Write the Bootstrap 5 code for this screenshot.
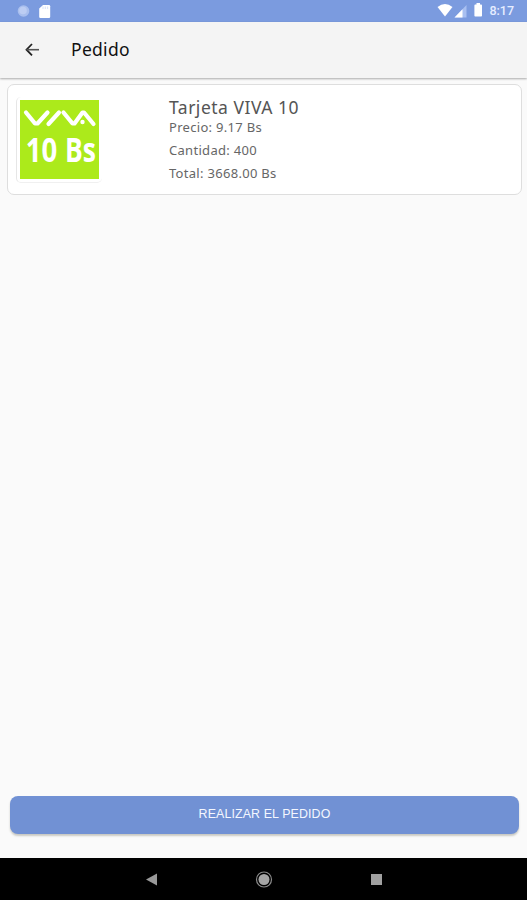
<!DOCTYPE html>
<html lang="es">
<head>
<meta charset="utf-8">
<meta name="viewport" content="width=device-width, initial-scale=1">
<title>Pedido</title>
<link href="https://cdn.jsdelivr.net/npm/bootstrap@5.3.0/dist/css/bootstrap.min.css" rel="stylesheet">
<style>
body{background:#fafafa;font-family:"Noto Sans","Open Sans",sans-serif;height:900px;overflow:hidden}
.status-bar{height:22px;background:#7b9bdf;padding:0 13px 0 17px}
.clock{font:500 12.5px/22px Roboto,sans-serif;color:#e6edff;margin-left:6px}
.app-bar{height:56px;background:#f4f4f4;padding-left:24px;box-shadow:0 1px 2px rgba(0,0,0,.32)}
.app-title{font-size:17.5px;font-weight:400;line-height:24px;letter-spacing:.3px;color:#111;margin:0 0 2px 30px}
.order-card{margin:6px 5px 0 7px;height:111px;border:1px solid #dedede;border-radius:7px;background:#fff}
.thumb{width:86px;height:86px;margin:12px 0 0 8px;border-left:1px solid #e6e6e6;border-bottom:1px solid #f0f0f0;border-radius:5px;padding:3px 0 0 3px}
.info{margin:12px 0 0 67px;color:#666}
.info h2{font-size:17.5px;font-weight:400;line-height:20px;letter-spacing:.5px;margin:0;color:#555}
.info p{font-size:13px;line-height:23px;letter-spacing:.3px;margin:0}
.info h2 + p{margin-top:-1px}
.btn-order{height:38px;margin:0 8px 24px 10px;border:0;border-radius:8px;background:#7191d4;color:#f4f7ff;font:400 12.4px/35px "Liberation Sans",sans-serif;letter-spacing:.12px;padding:0 0 2px;box-shadow:0 2px 2px rgba(90,90,70,.3)}
.btn-order:hover{background:#6485ca;color:#fff}
.nav-keys{height:42px;background:#000}
</style>
<script src="https://cdn.jsdelivr.net/npm/bootstrap@5.3.0/dist/js/bootstrap.bundle.min.js"></script>
</head>
<body class="d-flex flex-column m-0">
<div class="status-bar d-flex align-items-center flex-shrink-0">
  <svg class="d-block" width="40" height="22" viewBox="0 0 40 22"><circle cx="6.500" cy="11" r="5.800" fill="#a9bfee"/><circle cx="6" cy="10.500" r="3.800" fill="#bccdf3"/><path d="M26 5h6q1.200 0 1.200 1.200v10.600q0 1.200-1.200 1.200h-8.600q-1.200 0-1.200-1.200V8.500z" fill="#fff"/><path d="M26 6.500v2.500M28.300 6.500v2.500M30.600 6.500v2.500" stroke="#d5e0f8" stroke-width=".9"/></svg>
  <svg class="d-block ms-auto" width="46" height="22" viewBox="0 0 46 22"><path d="M.5 7q7.500-6 15 0L8 16.500z" fill="#fff"/><path d="M29.500 5v12.500H17.500z" fill="#a9c0f1"/><path d="M25.500 9.200v8.300h-8z" fill="#fff"/><path d="M39.500 3h3.500v1.600h1.200q.8 0 .8.800v10.300q0 .8-.8.800h-6q-.8 0-.8-.8V5.400q0-.8.800-.8h1.300z" fill="#fff"/></svg>
  <span class="clock">8:17</span>
</div>
<header class="app-bar d-flex align-items-center flex-shrink-0">
  <svg width="17" height="16" viewBox="0 0 17 16" fill="none"><path d="M8 2L2.500 7.700L8 13.400" stroke="#222" stroke-width="1.800"/><path d="M2.500 7.700H15" stroke="#555" stroke-width="1.600"/></svg>
  <h1 class="app-title">Pedido</h1>
</header>
<main class="flex-grow-1">
  <article class="order-card d-flex align-items-start">
    <div class="thumb flex-shrink-0">
      <svg class="d-block overflow-visible" width="80" height="80" viewBox="0 0 80 80"><rect width="79" height="79" fill="#acea1b"/><path d="M6 12.500L15 23.500H17.500L27.500 12.500M28.500 24L39 12.500M43.500 12.500L52.500 23.500H54.500L62.500 12.500H64L73.500 24" fill="none" stroke="#fff" stroke-width="4.200" stroke-linecap="round" stroke-linejoin="round"/><circle cx="62.500" cy="22" r="2.200" fill="#fff"/><text x="5.800" y="62.200" textLength="31.500" lengthAdjust="spacingAndGlyphs" font-family="Open Sans" font-weight="700" font-size="33.500" fill="#fff">10</text><text x="45" y="62.200" textLength="31" lengthAdjust="spacingAndGlyphs" font-family="Open Sans" font-weight="700" font-size="33.500" fill="#fff">Bs</text></svg>
    </div>
    <div class="info">
      <h2>Tarjeta VIVA 10</h2>
      <p>Precio: 9.17 Bs</p>
      <p>Cantidad: 400</p>
      <p>Total: 3668.00 Bs</p>
    </div>
  </article>
</main>
<button class="btn btn-order flex-shrink-0" type="button">REALIZAR EL PEDIDO</button>
<nav class="nav-keys flex-shrink-0">
  <svg class="d-block" width="527" height="42" viewBox="0 0 527 42"><path d="M146 21.500L157 15.500v12z" fill="#999"/><circle cx="264" cy="21.500" r="7.500" fill="none" stroke="#8a8a8a" stroke-width="1.200"/><circle cx="264" cy="21.500" r="5.500" fill="#a5a5a5"/><rect x="371" y="16" width="11" height="11" fill="#a0a0a0"/></svg>
</nav>
</body>
</html>
